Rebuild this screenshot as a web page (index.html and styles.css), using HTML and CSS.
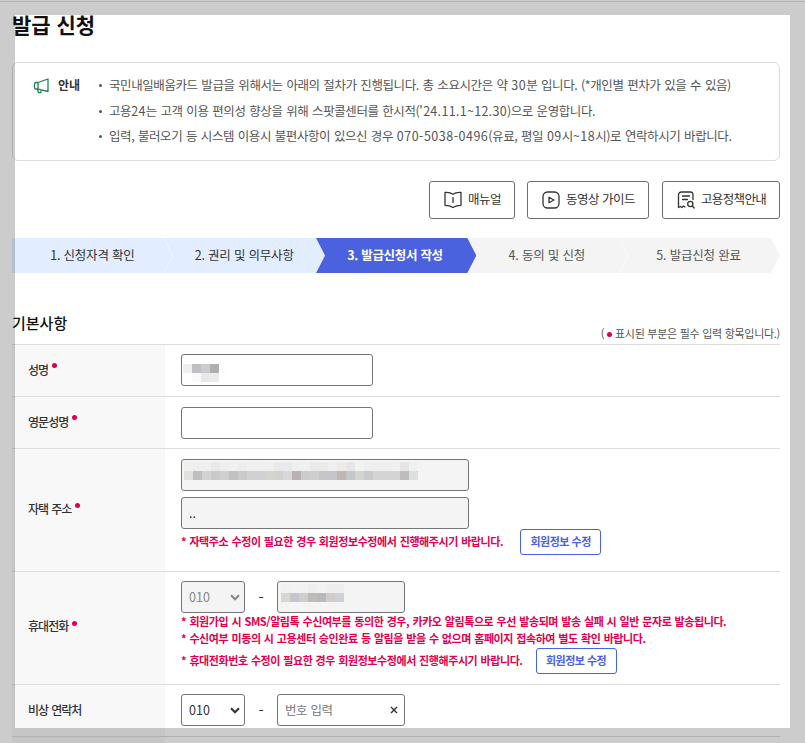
FILE: index.html
```
<!DOCTYPE html>
<html lang="ko">
<head>
<meta charset="utf-8">
<title>발급 신청</title>
<link rel="stylesheet" href="styles.css">
</head>
<body>
<main class="page">
  <h1 class="title">발급 신청</h1>

  <section class="notice">
    <svg class="horn" width="17" height="17" viewBox="0 0 17 17" fill="none" stroke="#1f8550" stroke-width="1.3" stroke-linejoin="round"><path d="M5 4.500 15 1v12.500L5 11.200zM5 4.500H2.800C.9 4.500.9 11 2.800 11H5M4.300 11l1.200 3.700h2.200l.5-2.600"/></svg>
    <strong class="notice-name">안내</strong>
    <ul class="notice-list">
      <li>국민내일배움카드 발급을 위해서는 아래의 절차가 진행됩니다. 총 소요시간은 약 <span class="num">30</span>분 입니다. (*개인별 편차가 있을 수 있음)</li>
      <li>고용<span class="num date">24</span>는 고객 이용 편의성 향상을 위해 스팟콜센터를 한시적(<span class="num date">'24.11.1~12.30</span>)으로 운영합니다.</li>
      <li>입력, 불러오기 등 시스템 이용시 불편사항이 있으신 경우 <span class="num">070-5038-0496</span>(유료, 평일 <span class="num">09</span>시<span class="num">~18</span>시)로 연락하시기 바랍니다.</li>
    </ul>
  </section>

  <div class="guides">
    <button class="guide g1"><svg width="18" height="18" viewBox="0 0 18 18"><path d="M9 3.200C7 1.700 4 1.300 1 1.500v12.800c3 0 5.500.5 8 2.200 2.500-1.700 5-2.200 8-2.200V1.500c-3-.2-6 .2-8 1.700zM9 6.500v5"/></svg><span>매뉴얼</span></button>
    <button class="guide g2"><svg width="18" height="18" viewBox="0 0 18 18"><rect x="1" y="1" width="16" height="16" rx="4.500"/><path d="M7 6.300v5.400L12 9z"/></svg><span>동영상 가이드</span></button>
    <button class="guide g3"><svg width="18" height="18" viewBox="0 0 18 18"><path d="M16 8.500V4c0-2-.8-3-2.500-3h-9C2.700 1 1.500 2 1.500 4v12.500l2-1 1.500 1 1.500-1.500 1.500 1M5.500 5h7M5.500 8.500h5"/><circle cx="13.300" cy="13" r="2.600"/><path d="m15.200 15 2 2"/></svg><span>고용정책안내</span></button>
  </div>

  <ol class="steps">
    <li class="done">1. 신청자격 확인</li>
    <li class="done">2. 권리 및 의무사항</li>
    <li class="current">3. 발급신청서 작성</li>
    <li>4. 동의 및 신청</li>
    <li>5. 발급신청 완료</li>
  </ol>

  <div class="section-head">
    <h2>기본사항</h2>
    <p>( <i class="dot"></i> 표시된 부분은 필수 입력 항목입니다.)</p>
  </div>

  <form class="table">
    <div class="row r-name">
      <div class="label">성명<i class="dot"></i></div>
      <div class="cell">
        <div class="field w192"><svg class="mosaic" width="45" height="27" shape-rendering="crispEdges"><path fill="#efefeb" d="M0 9h9v9H0z"/><path fill="#bebfc3" d="M9 9h9v9H9z"/><path fill="#cccccf" d="M18 9h9v9h-9z"/><path fill="#afafad" d="M27 9h9v9h-9z"/><path fill="#fbfcff" d="M36 9h6v9h-6z"/><path fill="#f9f9f9" d="M9 18h9v9H9z"/><path fill="#e8e8e8" d="M18 18h9v9h-9z"/><path fill="#ebebeb" d="M27 18h9v9h-9z"/></svg></div>
      </div>
    </div>
    <div class="row r-english">
      <div class="label">영문성명<i class="dot"></i></div>
      <div class="cell"><input class="field w192" type="text"></div>
    </div>
    <div class="row r-address">
      <div class="label"><span>자택 주소</span><i class="dot"></i></div>
      <div class="cell">
        <div class="field w288 off"><svg class="mosaic" id="address" width="234" height="27" shape-rendering="crispEdges"></svg></div>
        <input class="field w288 off second" type="text" value=".." readonly>
        <div class="warn with-button"><span>* 자택주소 수정이 필요한 경우 회원정보수정에서 진행해주시기 바랍니다.</span><button type="button" class="edit">회원정보 수정</button></div>
      </div>
    </div>
    <div class="row r-phone">
      <div class="label">휴대전화<i class="dot"></i></div>
      <div class="cell">
        <div class="phone">
          <div class="field select off muted"><span>010</span><svg width="10" height="7" viewBox="0 0 10 7"><path d="m1 1.300 4 4 4-4"/></svg></div>
          <span class="dash">-</span>
          <div class="field w128 off"><svg class="mosaic" id="mobile" width="63" height="27" shape-rendering="crispEdges"></svg></div>
        </div>
        <p class="warn line-a">* 회원가입 시 SMS/알림톡 수신여부를 동의한 경우, 카카오 알림톡으로 우선 발송되며 발송 실패 시 일반 문자로 발송됩니다.</p>
        <p class="warn line-b">* 수신여부 미동의 시 고용센터 승인완료 등 알림을 받을 수 없으며 홈페이지 접속하여 별도 확인 바랍니다.</p>
        <div class="warn with-button"><span>* 휴대전화번호 수정이 필요한 경우 회원정보수정에서 진행해주시기 바랍니다.</span><button type="button" class="edit">회원정보 수정</button></div>
      </div>
    </div>
    <div class="row r-extra">
      <div class="label"><span>비상 연락처</span></div>
      <div class="cell">
        <div class="phone">
          <div class="field select"><span>010</span><svg width="10" height="7" viewBox="0 0 10 7"><path d="m1 1.300 4 4 4-4"/></svg></div>
          <span class="dash">-</span>
          <div class="field w128 clearable"><span class="hint">번호 입력</span><svg width="8" height="8" viewBox="0 0 8 8"><path d="m1 1 6 6M7 1 1 7"/></svg></div>
        </div>
      </div>
    </div>
    <div class="row r-next"><div class="label"></div><div class="cell"></div></div>
  </form>
</main>
<div class="frame"></div>
<script src="mosaic.js"></script>
</body>
</html>
```
FILE: styles.css
```
* { box-sizing: border-box; margin: 0; padding: 0; }
html, body { height: 743px; overflow: hidden; }
body {
  background: #fff;
  color: #333;
  font-family: "Noto Sans CJK KR", sans-serif;
  font-size: 12.5px;
  border-top: 1px solid #fff;
}
button, input { font-family: inherit; }
ul, ol { list-style: none; }
svg { display: block; flex: none; }
i.dot { display: inline-block; width: 5px; height: 5px; border-radius: 50%; background: #e0004d; }

/* translucent mount around the page */
.frame {
  position: fixed;
  inset: 0;
  border: 15px solid rgba(0, 0, 0, .2);
  pointer-events: none;
}
.page { border-top: 1px solid #e3e3e3; padding: 0 25px 0 12px; white-space: nowrap; }

.title { height: 60px; padding-top: 7px; font-size: 21px; line-height: 30px; color: #111; }

.notice {
  display: flex;
  height: 99px;
  border: 1px solid #dcdcdc;
  border-radius: 6px;
  padding: 9px 20px;
  line-height: 25.5px;
}
.horn { margin-top: 6px; }
.notice-name { width: 51px; margin-left: 8px; font-size: 12px; line-height: 25px; }
.notice-list { color: #555; letter-spacing: -.42px; word-spacing: .65px; }
.num { letter-spacing: .5px; }
.date { letter-spacing: .3px; }
.notice-list li { position: relative; }
.notice-list li::before {
  content: "";
  position: absolute;
  left: -10px;
  top: 12px;
  width: 3px;
  height: 3px;
  border-radius: 50%;
  background: #555;
}

.guides { display: flex; justify-content: flex-end; margin-top: 20px; }
.guide {
  display: flex;
  align-items: center;
  gap: 6px;
  height: 38px;
  padding: 0 0 0 14px;
  border: 1px solid #6d6d6d;
  border-radius: 3px;
  background: #fff;
  color: #333;
  font-size: 12.5px;
  letter-spacing: -.5px;
}
.guide span { padding-bottom: 3px; }
.g3 span { letter-spacing: -.65px; }
.guide svg { fill: none; stroke: #333; stroke-width: 1.3; stroke-linejoin: round; stroke-linecap: round; }
.g1 { width: 86px; }
.g2 { width: 122px; margin: 0 13px 0 12px; }
.g3 { width: 118px; }

.steps { display: flex; height: 35px; margin-top: 19px; padding-right: 9px; }
.steps li {
  flex: 1 0 0;
  margin-right: -9px;
  background: #f4f4f4;
  color: #555;
  font-size: 12.5px;
  line-height: 34px;
  text-align: center;
  text-indent: -2px;
  letter-spacing: -.2px;
  clip-path: polygon(.4px 0, calc(100% - 9px) 0, 100% 50%, calc(100% - 9px) 100%, .4px 100%, 9.4px 50%);
}
.steps li:first-child { clip-path: polygon(0 0, calc(100% - 9px) 0, 100% 50%, calc(100% - 9px) 100%, 0 100%); }
.steps .done { background: #e2eeff; color: #333; text-indent: 0; }
.steps .current { background: #4b62df; color: #fff; font-weight: 700; letter-spacing: -.3px; }

.section-head { display: flex; justify-content: space-between; height: 71px; }
.section-head h2 { margin-top: 38px; font-size: 15px; font-weight: 500; line-height: 24px; color: #111; }
.section-head p { margin-top: 51px; font-size: 11px; line-height: 18px; color: #555; letter-spacing: -.3px; word-spacing: .1px; }
.section-head .dot { vertical-align: 1px; }

.row { display: flex; border-top: 1px solid #dcdcdc; }
.label {
  display: flex;
  align-items: center;
  width: 153px;
  padding: 0 0 3px 16px;
  background: #f8f8f8;
  font-size: 12px;
  font-weight: 500;
  letter-spacing: -.95px;
  word-spacing: .6px;
}
.label .dot { margin: -7px 0 0 4px; }
.cell { flex: 1; padding: 9px 0 0 16px; }
.r-name, .r-english, .r-extra { height: 52px; }
.r-english .cell, .r-address .cell { padding-top: 10px; }
.r-address { height: 123px; }
.r-phone { height: 113px; }
.r-phone .label { padding-bottom: 5px; }
.r-phone .dot { margin-top: -5px; }
.r-next { height: 20px; }

.field {
  display: flex;
  align-items: center;
  height: 32px;
  border: 1px solid #757575;
  border-radius: 3px;
  background: #fff;
  padding: 0 7px;
  font-size: 12.5px;
  color: #333;
}
.w192 { width: 192px; }
.w288 { width: 288px; }
.w128 { width: 128px; }
.off { background: #f4f4f4; }
.second { margin-top: 6px; padding-bottom: 2px; }
.r-name .mosaic { margin: -4px 0 0 -6px; }
.r-address .mosaic { margin: 0 0 0 -5px; }
.r-phone .mosaic { margin: 0 0 0 -4px; }
.phone { display: flex; align-items: center; }
.select { width: 64px; justify-content: space-between; padding-right: 4px; letter-spacing: .1px; }
.field span { padding-bottom: 2px; }
.select svg { fill: none; stroke: #333; stroke-width: 2; }
.muted { color: #888; }
.muted svg { stroke: #888; }
.dash { width: 32px; text-align: center; font-size: 15px; line-height: 20px; }
.clearable { justify-content: space-between; padding-right: 6px; }
.clearable svg { stroke: #333; stroke-width: 1.4; }
.hint { color: #777; letter-spacing: -.5px; word-spacing: .5px; }

.warn { color: #e0004d; font-size: 11px; font-weight: 700; letter-spacing: -.42px; word-spacing: .6px; line-height: 17px; }
.line-b { margin: 0 0 1px; }
.with-button { display: flex; gap: 17px; height: 26px; }
.with-button span { padding-top: 1px; line-height: 23px; }
.r-phone .with-button { gap: 13px; }
.edit {
  width: 81px;
  height: 26px;
  border: 1px solid #4b62df;
  border-radius: 3px;
  background: #fff;
  color: #4b62df;
  font-size: 11px;
  font-weight: 700;
  letter-spacing: -.5px;
  line-height: 20px;
  padding-bottom: 3px;
}
```
FILE: mosaic.js
```
// Paints the masked values: each row is a strip of 9px blocks.
const masks = {
  address: [
    [0, 9, "f0f0ef eeeeee efefef e9e9e9 eeeeee f0f0f0 ededed f0f0f0 f0f0f0 efefef e9e9e9 e8e9ec efefef f0f0f0 eaeaea ebebeb efefef ecebe8 e6e6e9 f2f2f1 eeeeee eeeeee eeeeee f0f0f0 e5e5e5 f0f0f0"],
    [9, 9, "e1e1df bfbfc0 d3d3d3 cacacd d2cecb c0c0c2 c9cbcb d1d1d1 d0d1d4 d5d3cf d1d3d1 d7d8d7 b8b3b2 cacdcb d0cdcd c5c6c5 c4c6cb beb8b0 c2c7c9 d4d4d3 c8cbca d4d4d4 d4d4d7 d2d5d4 bfbcbb dcdedf"],
  ],
  mobile: [
    [0, 9, "f1f1f1 f2f2f2 f2f2f2 eeeeee f2f2f2 eeeeee eeeeee"],
    [9, 9, "d9d6d2 c5c5cb d0cdca bebbb8 b7b9bb d1cbc9 ced1d6"],
  ],
};
for (const [id, rows] of Object.entries(masks)) {
  const svg = document.getElementById(id);
  for (const [y, h, colors] of rows) {
    colors.split(" ").forEach((color, i) => {
      const block = document.createElementNS("http://www.w3.org/2000/svg", "rect");
      block.setAttribute("x", i * 9);
      block.setAttribute("y", y);
      block.setAttribute("width", 9);
      block.setAttribute("height", h);
      block.setAttribute("fill", "#" + color);
      svg.append(block);
    });
  }
}
```
